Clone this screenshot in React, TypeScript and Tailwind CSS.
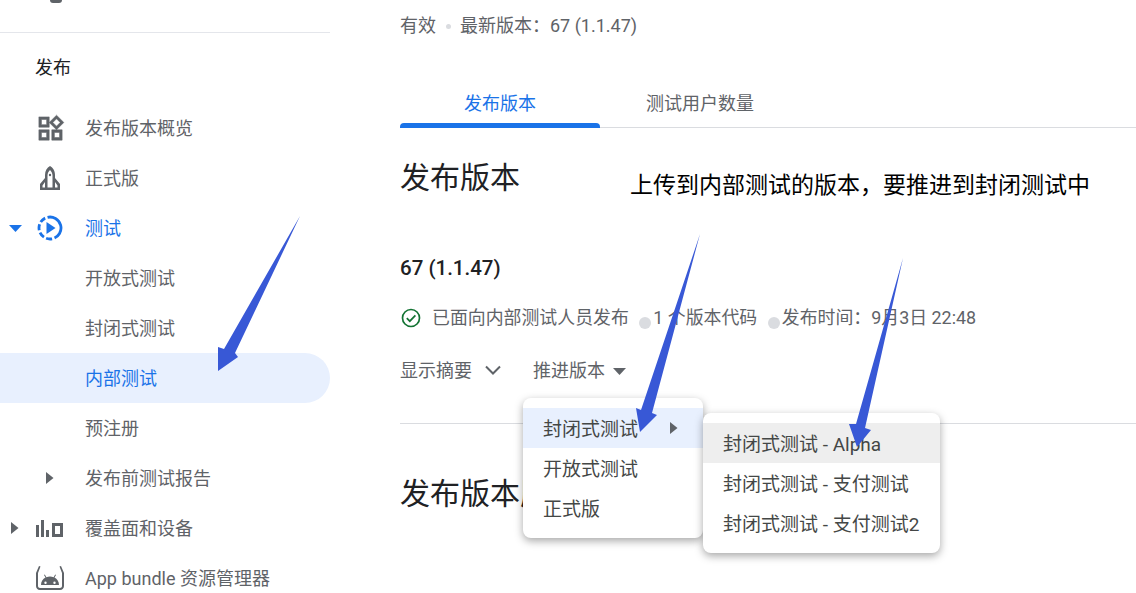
const textFont = "font-['Roboto','Noto_Sans_CJK_SC',sans-serif]"

const CaretRight = ({ className = '' }: { className?: string }) => (
  <svg width="8" height="12" viewBox="0 0 8 12" className={className}>
    <path d="M0 0l7.5 6L0 12z" fill="#5f6368" />
  </svg>
)

const WidgetsIcon = () => (
  <svg width="31" height="31" viewBox="0 0 24 24" fill="#5f6368" stroke="#5f6368" strokeWidth=".4">
    <path d="M16.66 4.52l2.83 2.83-2.83 2.83-2.83-2.83 2.83-2.83M9 5v4H5V5h4m10 10v4h-4v-4h4M9 15v4H5v-4h4m7.66-13.31L11 7.34 16.66 13l5.66-5.66-5.66-5.65zM11 3H3v8h8V3zm10 10h-8v8h8v-8zm-10 0H3v8h8v-8z" />
  </svg>
)

const RocketIcon = () => (
  <svg width="22" height="24" viewBox="0 0 22 24" fill="#5f6368">
    <path fillRule="evenodd" d="M11 0c3 1.500 5 5 5 9v3l5 6v6H1v-6l5-6V9c0-4 2-7.500 5-9zm0 4C9.500 5.500 8.500 7.500 8.500 9.500v12h5v-12C13.500 7.500 12.500 5.500 11 4zM6 16l-2.500 3.500v2H6zm10 0v5.500h2.500v-2z" />
    <circle cx="11" cy="9" r="1.200" />
  </svg>
)

const TestIcon = () => (
  <svg width="26" height="26" viewBox="0 0 26 26" fill="none">
    <circle cx="13" cy="13" r="11" stroke="#1a73e8" strokeWidth="2.800" strokeDasharray="24 2.500 6 2.500 6 2.500 6 2.500 6 2.500" transform="rotate(-60 13 13)" />
    <path d="M9.500 7l9 6-9 6z" fill="#1a73e8" />
  </svg>
)

const DevicesIcon = () => (
  <svg width="28" height="20" viewBox="0 0 28 20" fill="#5f6368">
    <path d="M0 7h3v12H0zM5 2h3v17H5zM10 12h3v7h-3z" />
    <path fillRule="evenodd" d="M16 5h11v14H16zm3 3v8h5V8z" />
  </svg>
)

const BundleIcon = () => (
  <svg width="30" height="24" viewBox="0 0 30 24" fill="#5f6368">
    <path d="M4 0L1 7v13c0 2 1.500 4 4 4h20c2.500 0 4-2 4-4V7l-3-7-1.500.6L27 7v13c0 1.200-.9 2-2 2H5c-1.100 0-2-.8-2-2V7L5.500.6z" />
    <path fillRule="evenodd" d="M6 19c0-3.300 1.800-6 4.500-7.400L9 9l.8-.5 1.600 2.700c2.300-.8 4.900-.8 7.200 0l1.600-2.700.8.500-1.500 2.600C22.200 13 24 15.700 24 19zm4.500-3.500a1.200 1.200 0 100 2.400 1.200 1.200 0 000-2.400zm9 0a1.200 1.200 0 100 2.400 1.200 1.200 0 000-2.400z" />
  </svg>
)

const navRows = [
  { label: '发布版本概览', icon: <WidgetsIcon /> },
  { label: '正式版', icon: <RocketIcon /> },
  {
    label: '测试',
    icon: <TestIcon />,
    caret: (
      <svg width="13" height="7" viewBox="0 0 13 7">
        <path d="M0 0h13L6.500 7z" fill="#1a73e8" />
      </svg>
    ),
    blue: true,
  },
  { label: '开放式测试' },
  { label: '封闭式测试' },
  { label: '内部测试', active: true },
  { label: '预注册' },
  { label: '发布前测试报告', icon: <CaretRight /> },
  { label: '覆盖面和设备', icon: <DevicesIcon />, caret: <CaretRight /> },
  { label: 'App bundle 资源管理器', icon: <BundleIcon /> },
]

const Sidebar = () => (
  <aside className="w-[330px] shrink-0">
    <div className="h-[33px] border-b border-[#e4e6eb]">
      <div className="ml-[50px] h-[3px] w-[12px] rounded-b-full bg-[#5f6368]" />
    </div>
    <div className="flex h-[70px] items-center pb-[2px] pl-[35px] text-[18px] text-[#202124]">发布</div>
    {navRows.map((row) => (
      <div
        key={row.label}
        className={`flex h-[50px] items-center text-[18px] ${row.active ? 'rounded-r-full bg-[#e8f0fe] text-[#1a73e8]' : row.blue ? 'text-[#1a73e8]' : 'text-[#5f6368]'}`}
      >
        <div className="flex w-[30px] justify-center">{row.caret}</div>
        <div className="flex w-[40px] justify-center">{row.icon}</div>
        <span className="ml-[15px] whitespace-nowrap">{row.label}</span>
      </div>
    ))}
  </aside>
)

const Dot = () => <span className="mt-[10px] mr-[2px] ml-[10.5px] h-[12px] w-[12px] shrink-0 rounded-full bg-[#dadce0]" />

const Main = () => (
  <main className="ml-[70px] flex-1 text-[18px] text-[#5f6368]">
    <div className="flex h-[50px] items-center">
      <span>有效</span>
      <span className="mt-[3px] mr-[9px] ml-[10px] h-[5px] w-[5px] rounded-full bg-[#dadce0]" />
      <span>最新版本：67 (1.1.47)</span>
    </div>
    <div className="mt-[28px] flex h-[50px] border-b border-[#dadce0]">
      <div className="relative flex h-[50px] w-[200px] items-center justify-center text-[#1a73e8]">
        发布版本
        <span className="absolute right-0 bottom-0 left-0 h-[5px] rounded-t-[4px] bg-[#1a73e8]" />
      </div>
      <div className="flex h-[50px] w-[200px] items-center justify-center">测试用户数量</div>
    </div>
    <h2 className="mt-[28px] h-[44px] text-[30px] leading-[44px] font-normal text-[#202124]">发布版本</h2>
    <div className="mt-[54px] h-[28px] text-[20.5px] leading-[28px] font-medium text-[#202124]">67 (1.1.47)</div>
    <div className="mt-[22px] flex h-[28px] items-center text-[17.9px] whitespace-nowrap">
      <svg width="22" height="22" viewBox="0 0 22 22" fill="none" className="mr-[10px]">
        <circle cx="11" cy="11" r="8.500" stroke="#137333" strokeWidth="1.700" />
        <path d="M6.800 11.200l3 3 5.600-5.800" stroke="#137333" strokeWidth="1.700" />
      </svg>
      <span>已面向内部测试人员发布</span>
      <Dot />
      <span>1 个版本代码</span>
      <Dot />
      <span>发布时间：9月3日 22:48</span>
    </div>
    <div className="mt-[24px] flex h-[28px] items-center">
      <span>显示摘要</span>
      <svg width="16" height="10" viewBox="0 0 16 10" fill="none" className="mr-[32px] ml-[13px]">
        <path d="M1 1.500l7 7 7-7" stroke="#5f6368" strokeWidth="2" />
      </svg>
      <span>推进版本</span>
      <svg width="13" height="7" viewBox="0 0 13 7" className="mt-[2px] ml-[8px]">
        <path d="M0 0h13L6.500 7z" fill="#5f6368" />
      </svg>
    </div>
    <div className="mt-[39px] border-t border-[#dadce0]" />
    <h2 className="mt-[48px] h-[44px] text-[30px] leading-[44px] font-normal whitespace-nowrap text-[#202124]">发布版本历史记录</h2>
  </main>
)

const Menu = ({ items, className }: { items: string[]; className: string }) => (
  <div className={`absolute rounded-[8px] bg-white py-[10px] text-[19px] text-[#444746] shadow-[0_3px_8px_rgba(0,0,0,0.35)] ${className}`}>
    {items.map((item) => (
      <div key={item} className="flex h-[40px] items-center px-[20px] pt-[4px] whitespace-nowrap">
        {item}
      </div>
    ))}
  </div>
)

export default function App() {
  return (
    <div className={`relative flex h-[593px] w-[1136px] overflow-hidden bg-white ${textFont}`}>
      <Sidebar />
      <Main />

      <Menu items={['开放式测试', '正式版']} className="top-[398px] left-[523px] w-[180px] pt-[50px]" />
      <div className="absolute top-[408px] left-[523px] flex h-[40px] w-[180px] items-center bg-[#e8f0fe] pt-[4px] pl-[20px] text-[19px] text-[#444746]">
        封闭式测试
        <CaretRight className="absolute top-[14px] left-[147px]" />
      </div>

      <Menu items={['封闭式测试 - 支付测试', '封闭式测试 - 支付测试2']} className="top-[413px] left-[703px] w-[237px] pt-[50px]" />
      <div className="absolute top-[423px] left-[703px] flex h-[40px] w-[237px] items-center bg-[#eeeeee] pt-[4px] pl-[20px] text-[19px] text-[#444746]">
        封闭式测试 - Alpha
      </div>

      <span className="absolute top-[169px] left-[630px] text-[23px] leading-[34px] whitespace-nowrap text-black">上传到内部测试的版本，要推进到封闭测试中</span>

      <svg width="1136" height="593" viewBox="0 0 1136 593" className="pointer-events-none absolute top-0 left-0">
        <path d="M300 216L235 353L238 357L218 371L218 347L224 349Z" fill="#3858d6" />
        <path d="M700 234L652 413L657 415L640 432L636 408L641 410Z" fill="#3858d6" />
        <path d="M903 258L865 428L871 430L857 447L849 424L856 424Z" fill="#3858d6" />
      </svg>
    </div>
  )
}
